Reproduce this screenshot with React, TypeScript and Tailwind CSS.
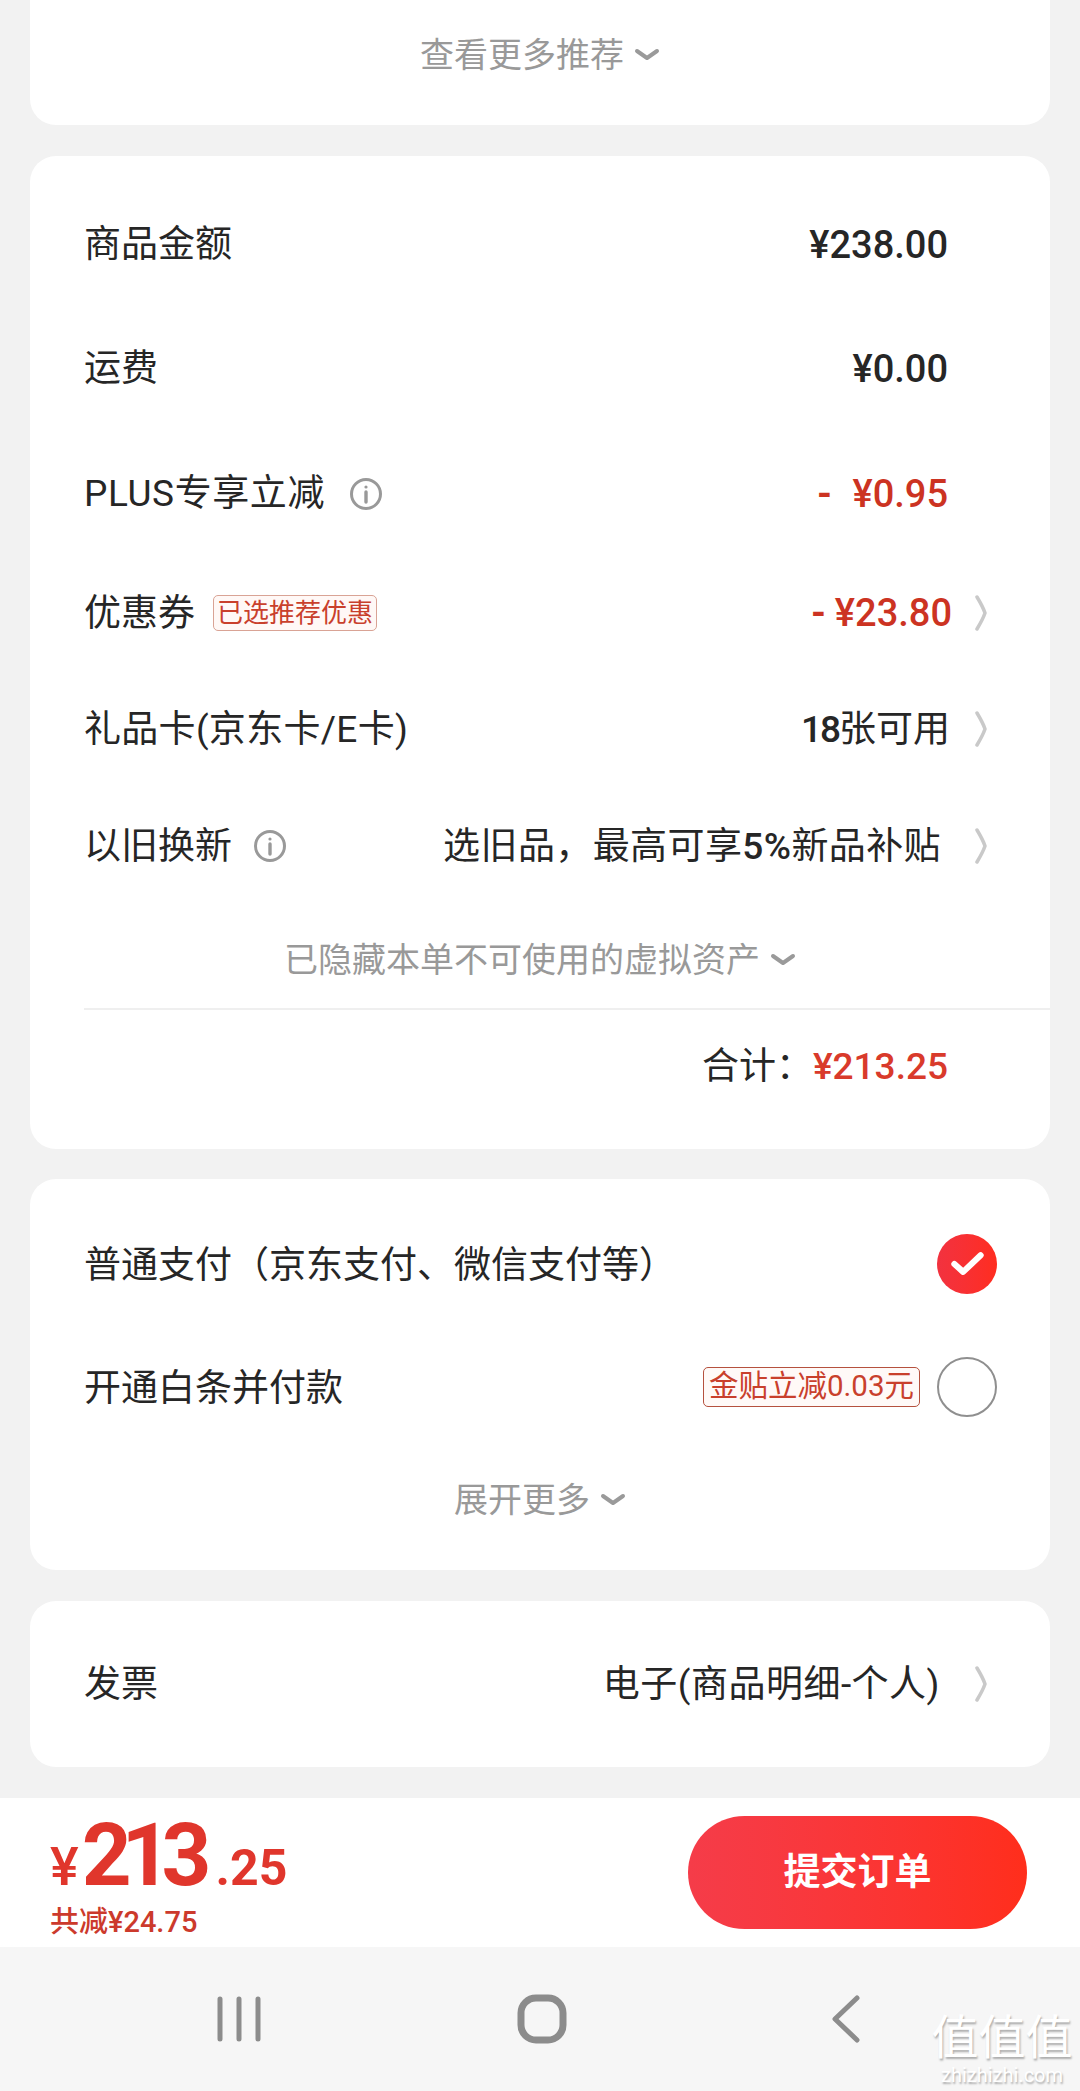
const CJK = "font-['Roboto','Noto_Sans_CJK_SC',sans-serif]";

function ChevronRight() {
  return (
    <svg viewBox="0 0 14 36" className="h-[36px] w-[14px] flex-none" fill="none" stroke="#c9c9c9" strokeWidth="3.5" strokeLinecap="round" strokeLinejoin="round">
      <path d="M3 2 Q9 12 11 18 Q9 24 3 34" />
    </svg>
  );
}

function ChevronDown() {
  return (
    <svg viewBox="0 0 26 16" className="h-[16px] w-[26px] flex-none" fill="none" stroke="#9a9a9a" strokeWidth="4" strokeLinecap="round" strokeLinejoin="round">
      <path d="M3 4 L13 11 L23 4" />
    </svg>
  );
}

function Info() {
  return (
    <svg viewBox="0 0 34 34" className="h-[34px] w-[34px] flex-none" fill="none" stroke="#999999">
      <circle cx="17" cy="17" r="14.5" strokeWidth="3" />
      <path d="M17 15 V25" strokeWidth="3.4" strokeLinecap="round" />
      <circle cx="17" cy="10" r="1.6" fill="#999999" stroke="none" />
    </svg>
  );
}

function Row({ className, children }: { className: string; children: React.ReactNode }) {
  return <div className={`flex items-center justify-between pl-[54px] ${className}`}>{children}</div>;
}

function More({ text, className }: { text: string; className: string }) {
  return (
    <div className={`flex items-center justify-center gap-[10px] text-[34px] text-[#999999] ${className}`}>
      <span>{text}</span>
      <ChevronDown />
    </div>
  );
}

export default function App() {
  return (
    <div className={`${CJK} relative flex h-[2091px] w-[1080px] flex-col overflow-hidden bg-[#f2f2f2] text-[37px] leading-none text-[#262626]`}>
      <div className="mx-[30px] h-[125px] rounded-b-[26px] bg-white pt-[36px]">
        <More text="查看更多推荐" className="h-[38px]" />
      </div>

      <div className="mx-[30px] mt-[31px] h-[993px] rounded-[26px] bg-white pt-[27px]">
        <Row className="h-[123px] pr-[102px]">
          <span>商品金额</span>
          <span className="text-[38px] font-medium">¥238.00</span>
        </Row>
        <Row className="h-[125px] pr-[102px]">
          <span>运费</span>
          <span className="text-[38px] font-medium">¥0.00</span>
        </Row>
        <Row className="h-[125px] pr-[102px]">
          <span className="flex items-center gap-[24px] tracking-[0.6px]">PLUS专享立减<Info /></span>
          <span className="text-[38px] font-medium text-[#cc3322]"><span className="mr-[11px] font-bold">-</span> ¥0.95</span>
        </Row>
        <Row className="h-[114px] pr-[62px]">
          <span className="flex items-center gap-[18px]">
            优惠券
            <span className="rounded-[5px] border border-[#d9a395] bg-[#fff8f6] px-[3px] py-[4px] text-[26px] text-[#c9402c]">已选推荐优惠</span>
          </span>
          <span className="flex items-center gap-[22px] text-[38px] font-medium text-[#cc3322]"><span><span className="mr-[9px] font-bold">-</span>¥23.80</span><ChevronRight /></span>
        </Row>
        <Row className="h-[118px] pr-[62px]">
          <span className="tracking-[0.3px]">礼品卡(京东卡/E卡)</span>
          <span className="flex items-center gap-[24px]"><span><span className="font-medium tracking-[-2px]">18</span>张可用</span><ChevronRight /></span>
        </Row>
        <Row className="h-[116px] pr-[62px]">
          <span className="flex items-center gap-[21px]">以旧换新<Info /></span>
          <span className="flex items-center gap-[33px]"><span className="tracking-[0.4px]">选旧品，最高可享<span className="font-medium">5%</span>新品补贴</span><ChevronRight /></span>
        </Row>
        <More text="已隐藏本单不可使用的虚拟资产" className="mt-[8px] h-[96px]" />
        <div className="ml-[54px] h-[2px] bg-[#efefef]" />
        <div className="flex items-center justify-end pr-[102px] pt-[38px]">
          <span>合计：</span>
          <span className="text-[37px] font-medium text-[#d93a2b]">¥213.25</span>
        </div>
      </div>

      <div className="mx-[30px] mt-[30px] h-[391px] rounded-[26px] bg-white pt-[55px]">
        <Row className="h-[60px] pr-[53px]">
          <span className="pt-[3px]">普通支付（京东支付、微信支付等）</span>
          <span className="flex h-[60px] w-[60px] items-center justify-center rounded-full bg-gradient-to-r from-[#f2323f] to-[#ff2d1f]">
            <svg viewBox="0 0 40 32" className="h-[28px] w-[35px]" fill="none" stroke="#ffffff" strokeWidth="7" strokeLinecap="round" strokeLinejoin="round">
              <path d="M5 16 L15 25 L35 6" />
            </svg>
          </span>
        </Row>
        <Row className="mt-[63px] h-[60px] pr-[53px]">
          <span className="pt-[3px]">开通白条并付款</span>
          <span className="flex items-center gap-[17px]">
            <span className="rounded-[5px] border border-[#b5513e] bg-[#fff9f7] px-[5px] py-[4px] text-[29.5px] text-[#c9402c]">金贴立减0.03元</span>
            <span className="h-[60px] w-[60px] rounded-full border-2 border-[#8f8f8f]" />
          </span>
        </Row>
        <More text="展开更多" className="mt-[63px] h-[40px]" />
      </div>

      <div className="mx-[30px] mt-[31px] h-[166px] rounded-[26px] bg-white">
        <Row className="h-full pr-[62px]">
          <span>发票</span>
          <span className="flex items-center gap-[34px]"><span className="tracking-[0.5px]">电子(商品明细-个人)</span><ChevronRight /></span>
        </Row>
      </div>

      <div className="mt-[31px] flex h-[149px] items-center justify-between bg-white pl-[50px] pr-[53px]">
        <div className="flex flex-col pt-[3px] text-[#e0362c]">
          <div className="flex items-baseline font-bold">
            <span className="mr-[3px] text-[54px] font-medium">¥</span>
            <span className="text-[87px] leading-[86px] tracking-[-10px]">213</span>
            <span className="ml-[14px] text-[50px]">.25</span>
          </div>
          <span className="mt-[10px] text-[29px] font-medium text-[#cc3a2c]">共减¥24.75</span>
        </div>
        <div className="flex h-[113px] w-[339px] items-center justify-center rounded-full bg-gradient-to-r from-[#f53c49] to-[#ff2e1b] text-[37px] font-bold text-white">
          提交订单
        </div>
      </div>

      <div className="flex flex-1 items-center bg-[#f6f6f6]">
        <div className="flex w-[1080px] items-center pl-[216px]">
          <svg viewBox="0 0 46 46" className="h-[46px] w-[46px]" fill="none" stroke="#8c8c8c" strokeWidth="5" strokeLinecap="round">
            <path d="M4 3 V43 M23 3 V43 M42 3 V43" />
          </svg>
          <svg viewBox="0 0 50 50" className="ml-[255px] h-[50px] w-[50px]" fill="none" stroke="#8c8c8c" strokeWidth="7">
            <rect x="4" y="4" width="42" height="42" rx="15" />
          </svg>
          <svg viewBox="0 0 30 48" className="ml-[264px] h-[48px] w-[30px]" fill="none" stroke="#8c8c8c" strokeWidth="5" strokeLinecap="round" strokeLinejoin="round">
            <path d="M26 3 L4 24 L26 45" />
          </svg>
        </div>
      </div>

      <div className="absolute left-[930px] top-[2014px] flex w-[144px] flex-col items-center whitespace-nowrap text-white [text-shadow:1px_2px_2px_rgba(0,0,0,0.3)]">
        <span className="text-[47px] leading-[48px]">值值值</span>
        <span className="mt-[3px] text-[20px] leading-[20px]">zhizhizhi.com</span>
      </div>
    </div>
  );
}
